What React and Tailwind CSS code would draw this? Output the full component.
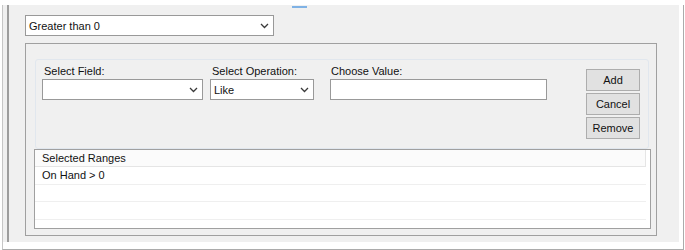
import React from "react";

function Chevron() {
  return (
    <svg width="9" height="6" viewBox="0 0 9 6" className="shrink-0">
      <path d="M1 1l3.5 3.5L8 1" fill="none" stroke="#3a3a3a" strokeWidth="1.3" />
    </svg>
  );
}

function Combo({ className, text }) {
  return (
    <div
      className={
        "flex h-[21px] items-center justify-between border border-[#999999] bg-white pl-[3px] pr-[4px] " +
        className
      }
    >
      <span className="leading-[14px]">{text}</span>
      <Chevron />
    </div>
  );
}

function Btn({ children }) {
  return (
    <div className="flex h-[22px] w-full items-center justify-center border border-[#adadad] bg-[#e1e1e1] leading-[14px]">
      {children}
    </div>
  );
}

export default function App() {
  return (
    <div className="h-[250px] w-[685px] overflow-hidden bg-white font-['Liberation_Sans',Arial,sans-serif] text-[11px] text-[#111111]">
      <div className="ml-[2px] h-[245px] w-[682px] border-b border-l border-r border-b-[#ababab] border-l-[#c6c6c6] border-r-[#ababab] bg-white">
        <div className="mt-[5px] flex h-[237px] w-[676px] bg-[#f0f0f0]">
          <div className="w-[4px] shrink-0" />
          <div className="h-full w-[2px] shrink-0 bg-[#9d9d9d]" />
          <div className="flex flex-1 flex-col">
            <div className="ml-[283px] mt-[1px] h-[2px] w-[15px] bg-[#7fb2e5]" />
            <Combo className="ml-[16px] mt-[7px] w-[249px]" text="Greater than 0" />
            <div className="ml-[16px] mt-[7px] flex h-[193px] w-[632px] flex-col border border-[#a0a0a0]">
              <div className="ml-[9px] mt-[15px] flex h-[90px] w-[614px] items-start rounded-[3px] border border-[#e1e7ee] pl-[6px]">
                <div className="flex w-[161px] flex-col pt-[3px]">
                  <div className="h-[16px] pl-[2px] leading-[16px]">Select Field:</div>
                  <Combo className="w-full" text="" />
                </div>
                <div className="ml-[7px] flex w-[104px] flex-col pt-[3px]">
                  <div className="h-[16px] pl-[2px] leading-[16px]">Select Operation:</div>
                  <Combo className="w-full" text="Like" />
                </div>
                <div className="ml-[16px] flex w-[217px] flex-col pt-[3px]">
                  <div className="h-[16px] pl-[1px] leading-[16px]">Choose Value:</div>
                  <div className="h-[21px] w-full border border-[#999999] bg-white" />
                </div>
                <div className="ml-[39px] mt-[9px] flex w-[54px] flex-col gap-[2px]">
                  <Btn>Add</Btn>
                  <Btn>Cancel</Btn>
                  <Btn>Remove</Btn>
                </div>
              </div>
              <div className="ml-[8px] flex h-[80px] w-[617px] flex-col border border-[#a0a0a0] bg-white">
                <div className="flex h-[17px] w-full">
                  <div className="h-full w-[611px] border-b border-r border-[#e5e5e5] bg-[#fbfbfb] pl-[7px] leading-[16px]">
                    Selected Ranges
                  </div>
                </div>
                <div className="h-[18px] w-[611px] border-b border-[#efefef] pl-[7px] leading-[17px]">On Hand &gt; 0</div>
                <div className="h-[17px] w-[611px] border-b border-[#efefef]" />
                <div className="h-[18px] w-[611px] border-b border-[#efefef]" />
              </div>
            </div>
          </div>
        </div>
      </div>
    </div>
  );
}
